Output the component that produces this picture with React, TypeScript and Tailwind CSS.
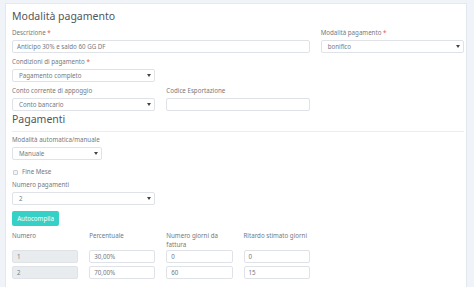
import React from "react";

const font = { fontFamily: '"Noto Sans", "Open Sans", sans-serif' };

function Label({ children, req }: { children: React.ReactNode; req?: boolean }) {
  return (
    <div className="text-[6.2px] leading-[8px] text-[#737a82] mb-[3px] whitespace-nowrap">
      {children}
      {req && <span className="text-[#e55353]"> *</span>}
    </div>
  );
}

function Input({ value, disabled }: { value?: string; disabled?: boolean }) {
  return (
    <div
      className={`h-[13px] border border-[#dfe3e8] rounded-[2px] px-[4px] flex items-center text-[6.2px] text-[#737a82] ${
        disabled ? "bg-[#e9ecef]" : "bg-white"
      }`}
    >
      {value}
    </div>
  );
}

function Select({ value, className = "" }: { value: string; className?: string }) {
  return (
    <div
      className={`h-[13px] border border-[#dfe3e8] rounded-[2px] pl-[6px] pr-[3px] flex items-center justify-between text-[6.2px] text-[#737a82] bg-white ${className}`}
    >
      <span>{value}</span>
      <svg width="4" height="3" viewBox="0 0 4 3">
        <path d="M0 0 L4 0 L2 3 Z" fill="#444" />
      </svg>
    </div>
  );
}

export default function App() {
  return (
    <div className="w-[474px] h-[287px] overflow-hidden bg-[#f0f4f8] pt-[3px] pl-[5px]" style={font}>
      <div className="w-[462px] h-[300px] bg-white border border-[#e4e9ef] pl-[6px] pr-[2px] pt-[5px]">
        <div className="text-[10.5px] leading-[14px] text-[#51565d]">Modalità pagamento</div>
        <div className="grid grid-cols-12 gap-x-[11px] gap-y-[5px] mt-[6px]">
          <div className="col-span-8">
            <Label req>Descrizione</Label>
            <Input value="Anticipo 30% e saldo 60 GG DF" />
          </div>
          <div className="col-span-4">
            <Label req>Modalità pagamento</Label>
            <Select value="bonifico" />
          </div>
          <div className="col-span-4">
            <Label req>Condizioni di pagamento</Label>
            <Select value="Pagamento completo" />
          </div>
          <div className="col-span-8" />
          <div className="col-span-4">
            <Label>Conto corrente di appoggio</Label>
            <Select value="Conto bancario" />
          </div>
          <div className="col-span-4">
            <Label>Codice Esportazione</Label>
            <Input />
          </div>
        </div>
        <div className="mt-[1px] text-[10.5px] leading-[14px] text-[#51565d] pb-[5px] border-b border-[#e9edf2]">
          Pagamenti
        </div>
        <div className="mt-[4px]">
          <Label>Modalità automatica/manuale</Label>
          <Select value="Manuale" className="w-[90px]" />
        </div>
        <div className="mt-[8px] flex items-center gap-[4px] h-[8px] pl-[1px]">
          <div className="w-[5px] h-[5px] border border-[#c9ced4] rounded-[1px] bg-[#f3f4f6]" />
          <span className="text-[6.2px] text-[#737a82]">Fine Mese</span>
        </div>
        <div className="grid grid-cols-12 gap-x-[11px] mt-[5px]">
          <div className="col-span-4">
            <Label>Numero pagamenti</Label>
            <Select value="2" />
          </div>
        </div>
        <button className="mt-[6px] h-[15px] w-[47px] rounded-[2px] bg-[#36d1c6] text-white text-[6.2px] flex items-center justify-center">
          Autocompila
        </button>
        <div className="grid grid-cols-12 gap-x-[11px] mt-[5px] text-[6.2px] leading-[9px] text-[#737a82]">
          <div className="col-span-2">Numero</div>
          <div className="col-span-2">Percentuale</div>
          <div className="col-span-2">Numero giorni da fattura</div>
          <div className="col-span-2 whitespace-nowrap">Ritardo stimato giorni</div>
        </div>
        <div className="grid grid-cols-12 gap-x-[11px] gap-y-[3px] mt-[1px]">
          <div className="col-span-2"><Input value="1" disabled /></div>
          <div className="col-span-2"><Input value="30,00%" /></div>
          <div className="col-span-2"><Input value="0" /></div>
          <div className="col-span-2"><Input value="0" /></div>
          <div className="col-span-4" />
          <div className="col-span-2"><Input value="2" disabled /></div>
          <div className="col-span-2"><Input value="70,00%" /></div>
          <div className="col-span-2"><Input value="60" /></div>
          <div className="col-span-2"><Input value="15" /></div>
          <div className="col-span-4" />
        </div>
      </div>
    </div>
  );
}
